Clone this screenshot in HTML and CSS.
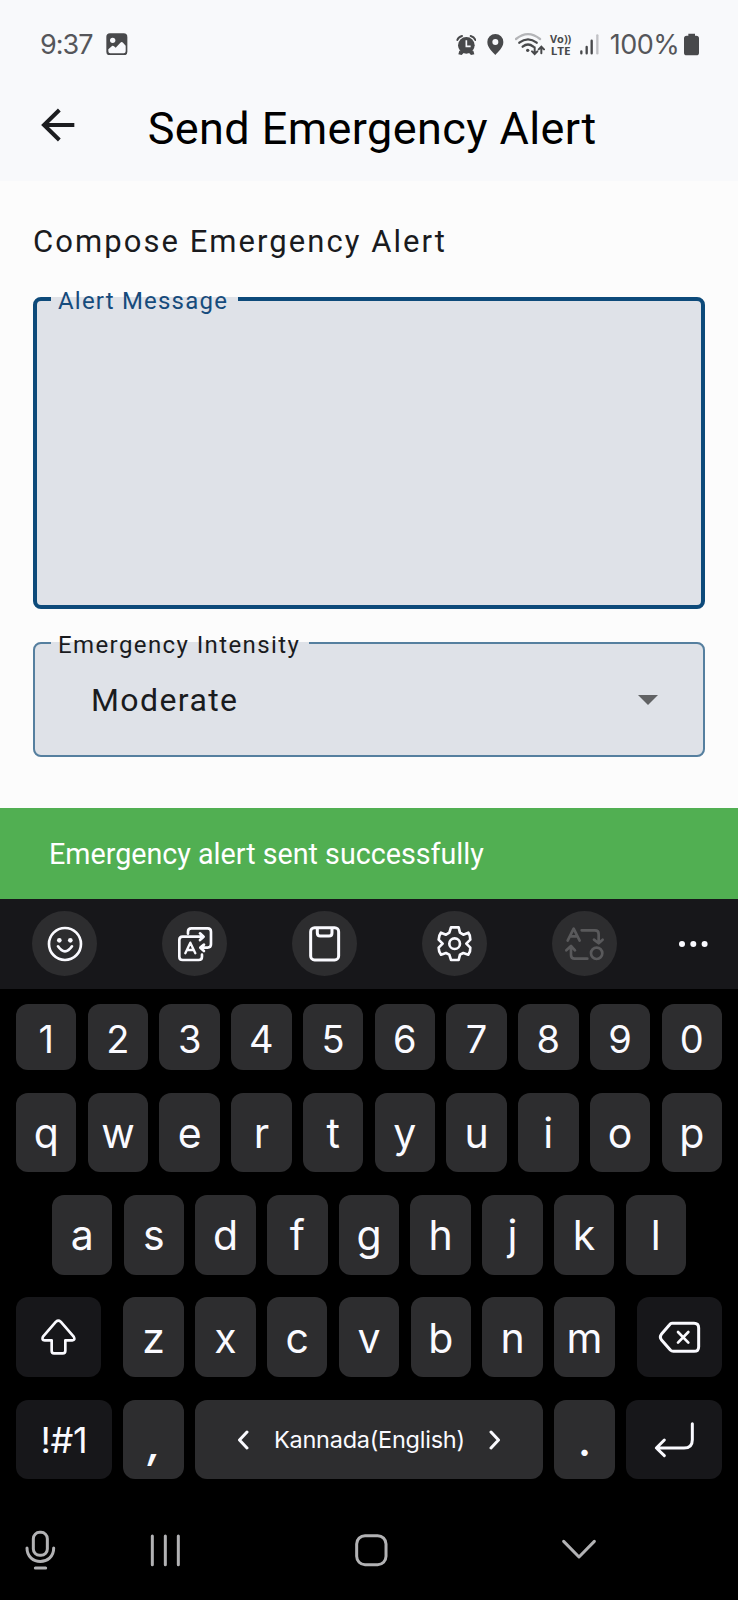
FILE: index.html
```html
<!DOCTYPE html>
<html lang="en">
<head>
<meta charset="utf-8">
<title>Send Emergency Alert</title>
<link rel="stylesheet" href="styles.css">
</head>
<body>
<div class="screen">
  <header class="header">
    <div class="status">
      <span class="time">9:37</span>
      <svg class="photo" viewBox="317 98 65 68"><rect x="318" y="99" width="63" height="66" rx="11" fill="#48494b"/><circle cx="337" cy="120" r="8" fill="#f8f9fc"/><path d="M324 147l11-10q3-2 6 1l5 4 14-15q4-4 8 0l8 9v17q0 6-6 6h-40q-6 0-6-6z" fill="#f8f9fc"/></svg>
      <span class="status-right">
        <svg class="alarm" viewBox="48 50 62 75"><g fill="#48494b"><circle cx="79" cy="90" r="25"/><path d="M58 106l-3 11 10 2 8-8zM100 106l3 11-10 2-8-8z"/></g><path d="M52 74q3-9 14-12M106 74q-3-9-14-12" fill="none" stroke="#48494b" stroke-width="6" stroke-linecap="round"/><path d="M79 75v18h13" fill="none" stroke="#f8f9fc" stroke-width="5"/></svg>
        <svg class="pin" viewBox="143 50 50 75"><path d="M168 119c-8-10-24-21-24-39a24 24 0 0 1 48 0c0 18-16 29-24 39z" fill="#48494b"/><circle cx="168" cy="80" r="9" fill="#f8f9fc"/></svg>
        <svg class="wifi" viewBox="225 50 90 75"><g fill="none" stroke-width="7" stroke-linecap="round"><path d="M228 71q36-29 72 0" stroke="#b4b5b8"/><path d="M238 82q26-20 52 0M248 94q16-13 32 0" stroke="#48494b"/><path d="M284 96v19m-8-7l8 8 8-8M304 114V96m-8 6l8-8 8 8" stroke="#48494b" stroke-width="6"/></g><circle cx="263" cy="105" r="5" fill="#48494b"/></svg>
        <svg class="volte" viewBox="332 50 66 75"><g fill="#48494b" font-family="Open Sans, sans-serif" font-weight="700"><text x="332" y="83" font-size="32" textLength="64" lengthAdjust="spacingAndGlyphs">Vo))</text><text x="334" y="120" font-size="34" textLength="60" lengthAdjust="spacingAndGlyphs">LTE</text></g></svg>
        <svg class="signal" viewBox="422 50 56 75"><g stroke="#48494b" stroke-width="7" stroke-linecap="round"><path d="M426 108v6M442 95v19M457 76v38"/><path d="M474 60v54" stroke="#c1c2c5"/></g></svg>
        <span class="percent">100%</span>
        <svg class="battery" viewBox="731 50 45 75"><path d="M744 55h20v6h4q8 0 8 8v43q0 8-8 8h-29q-8 0-8-8V69q0-8 8-8h5z" fill="#48494b"/></svg>
      </span>
    </div>
    <div class="appbar">
      <svg class="back" viewBox="122 324 102 102"><path d="M222 375H131M177 330l-46 45 46 45" fill="none" stroke="#1c1d20" stroke-width="12"/></svg>
      <h1>Send Emergency Alert</h1>
    </div>
  </header>

  <main class="form">
    <h2>Compose Emergency Alert</h2>
    <fieldset class="field message"><legend>Alert Message</legend></fieldset>
    <fieldset class="field intensity"><legend>Emergency Intensity</legend>
      <div class="select"><span>Moderate</span><svg class="caret" viewBox="0 0 20 10"><path d="M0 0h20L10 10z" fill="#616264"/></svg></div>
    </fieldset>
  </main>

  <div class="snackbar">Emergency alert sent successfully</div>

  <section class="keyboard">
    <div class="tools">
      <span class="tool"><svg viewBox="96 332 196 196" fill="none" stroke="#fafaff" stroke-width="8" stroke-linecap="round"><circle cx="195" cy="431" r="48"/><path d="M174 438q21 30 42 0"/><circle cx="178" cy="420" r="7" fill="#fafaff" stroke="none"/><circle cx="211" cy="420" r="7" fill="#fafaff" stroke="none"/></svg></span>
      <span class="tool"><svg viewBox="486 332 196 196" fill="none" stroke="#fafaff" stroke-width="8" stroke-linecap="round" stroke-linejoin="round"><path d="M564 400v-6q0-10 10-10h49q10 0 10 10v38q0 10-10 10h-20M612 433l-11 9 11 10M610 409h-62q-10 0-10 10v50q0 10 10 10h48q10 0 10-10v-6M600 399l11 10-11 10"/><path d="M556 459l15-32 15 32M561 449h20" stroke-width="7"/></svg></span>
      <span class="tool"><svg viewBox="876 332 196 196" fill="none" stroke="#fafaff" stroke-width="9" stroke-linejoin="round"><rect x="932" y="382" width="84" height="97" rx="12"/><path d="M952 382v16q0 9 9 9h26q9 0 9-9v-16"/></svg></span>
      <span class="tool"><svg viewBox="155 63 196 196" fill="none" stroke="#fafaff" stroke-width="8" stroke-linejoin="round"><circle cx="253" cy="161" r="16"/><path d="M242 112h23l4 16 10 6 15-6q7 9 6 21l-12 12 12 12q1 12-6 21l-15-5-10 5-4 16h-23l-5-16-10-5-15 5q-7-9-7-21l12-12-12-12q0-12 7-21l15 6 10-6z"/></svg></span>
      <span class="tool"><svg viewBox="545 63 196 196" fill="none" stroke="#59595b" stroke-width="8" stroke-linecap="round" stroke-linejoin="round"><path d="M592 152l18-36 18 36M599 139h22M634 121h40q11 0 11 11v27M671 149l14 11 12-11M588 181l14-13 12 13M602 171v24q0 11 11 11h38"/><circle cx="679" cy="190" r="17"/></svg></span>
      <svg class="more" viewBox="0 0 30 8" fill="#fafaff"><circle cx="4" cy="4" r="3"/><circle cx="15.3" cy="4" r="3"/><circle cx="26.6" cy="4" r="3"/></svg>
    </div>
    <div class="keys">
      <div class="row digits"><span>1</span><span>2</span><span>3</span><span>4</span><span>5</span><span>6</span><span>7</span><span>8</span><span>9</span><span>0</span></div>
      <div class="row"><span>q</span><span>w</span><span>e</span><span>r</span><span>t</span><span>y</span><span>u</span><span>i</span><span>o</span><span>p</span></div>
      <div class="row home-row"><span>a</span><span>s</span><span>d</span><span>f</span><span>g</span><span>h</span><span>j</span><span>k</span><span>l</span></div>
      <div class="row shift-row">
        <span class="dark shift"><svg viewBox="48 51 255 240" fill="none" stroke="#fafaff" stroke-width="8" stroke-linejoin="round"><path d="M168 125q7-6 14 0l39 45q6 11-4 11h-21v31q0 8-8 8h-26q-7 0-7-8v-31h-21q-10 0-5-11z"/></svg></span>
        <span>z</span><span>x</span><span>c</span><span>v</span><span>b</span><span>n</span><span>m</span>
        <span class="dark backspace"><svg viewBox="801 51 255 240" fill="none" stroke="#fafaff" stroke-width="9" stroke-linecap="round" stroke-linejoin="round"><path d="M906 130h66q14 0 14 14v56q0 14-14 14h-62q-5 0-9-4l-27-31q-6-8 0-16l24-28q4-5 8-5z"/><path d="M924 156l31 32M955 156l-31 32" stroke-width="8"/></svg></span>
      </div>
      <div class="row space-row">
        <span class="dark symbols">!#1</span>
        <span class="comma">,</span>
        <span class="space"><svg viewBox="0 0 12 20"><path d="M10 2L2.500 10 10 18"/></svg><b>Kannada(English)</b><svg viewBox="0 0 12 20"><path d="M2 2l7.500 8L2 18"/></svg></span>
        <span class="period">.</span>
        <span class="dark"><svg viewBox="768 360 288 237" fill="none" stroke="#fafaff" stroke-width="9" stroke-linecap="round" stroke-linejoin="round"><path d="M967 430v48q0 25-25 25h-82M883 479l-24 24 24 23"/></svg></span>
      </div>
    </div>
    <nav class="nav" aria-label="System">
      <svg class="mic" viewBox="75 750 92 122"><rect x="100" y="757" width="42" height="69" rx="19"/><path d="M81 804c0 54 80 54 80 0M106 864h31"/></svg>
      <svg class="recents" viewBox="450 750 93 122"><path d="M457 768v86M496 768v86M535 768v86"/></svg>
      <svg class="home" viewBox="1066 750 98 122"><rect x="1071" y="767" width="88" height="87" rx="25"/></svg>
      <svg class="down" viewBox="575 750 102 122"><path d="M580 784l46 47 46-47"/></svg>
    </nav>
  </section>
</div>
</body>
</html>
```
FILE: styles.css
```css
* { box-sizing: border-box; }
body { margin: 0; background: #000; }
svg { display: block; flex: none; }
.screen { width: 738px; height: 1600px; display: flex; flex-direction: column; background: #fcfcfc; font-family: Roboto, sans-serif; overflow: hidden; }

.header { height: 181px; background: #f8f9fb; }
.status { height: 88px; display: flex; align-items: center; padding: 0 39px 0 40px; font-family: Inter, sans-serif; font-weight: 400; font-size: 27px; color: #55565a; }
.time { width: 66px; letter-spacing: -1px; }
.photo { width: 21.7px; height: 22.7px; }
.status-right { margin-left: auto; display: flex; align-items: center; }
.status-right svg { height: 25px; }
.alarm { width: 20.7px; margin-right: 11px; }
.pin { width: 16.7px; margin-right: 10.7px; }
.wifi { width: 30px; margin-right: 5.7px; }
.volte { width: 22px; margin-right: 8px; overflow: visible; }
.signal { width: 18.7px; margin-right: 10.8px; }
.percent { width: 74.2px; white-space: nowrap; letter-spacing: -0.5px; }
.battery { width: 15px; }

.appbar { height: 74px; display: flex; align-items: center; padding-left: 40.7px; }
.back { width: 34px; height: 34px; margin-right: 73px; }
h1 { margin: 7px 0 0; font-size: 45px; font-weight: 400; line-height: 50px; color: #000; white-space: nowrap; letter-spacing: 0.4px; }

.form { height: 627px; padding: 42px 33px 0; color: #1a1b1e; }
h2 { margin: 0; height: 64px; line-height: 38px; font-size: 31px; font-weight: 400; letter-spacing: 2.05px; white-space: nowrap; }
.field { margin: 0; padding: 0; min-width: 0; background: #dfe2e8; border-radius: 8px; }
.field legend { margin-left: 14px; padding: 4px 7px 0; height: 24px; line-height: 21px; font-size: 24px; letter-spacing: 1.2px; white-space: nowrap; }
.message { height: 322px; border: 4px solid #0d4a7a; }
.message legend { width: 187px; color: #164b7c; }
.intensity { height: 126px; margin-top: 22px; border: 2px solid #557f9f; }
.intensity legend { margin-left: 16px; width: 258px; letter-spacing: 1.4px; }
.select { display: flex; align-items: center; justify-content: space-between; height: 100px; padding: 0 45px 10px 56px; font-size: 32px; letter-spacing: 1.4px; }
.caret { width: 20px; height: 10px; }

.snackbar { height: 90.5px; padding: 2px 0 0 49px; display: flex; align-items: center; background: #51af52; color: #fff; font-size: 28.7px; white-space: nowrap; }

.keyboard { flex: 1; background: #000; color: #fafaff; font-family: Inter, sans-serif; }
.tools { height: 90.7px; display: flex; align-items: center; gap: 64.6px; padding-left: 32px; background: #17171a; }
.tool { width: 65.3px; height: 65.3px; border-radius: 50%; background: #2d2d2f; flex: none; }
.tool svg { width: 100%; height: 100%; }
.more { width: 30px; height: 8px; margin-left: -3px; }

.keys { padding: 15.3px 16px 0; display: grid; gap: 22.7px; }
.row { display: grid; grid-template-columns: repeat(10, 1fr); gap: 11.3px; height: 79.7px; font-size: 41px; }
.row > span { display: flex; align-items: center; justify-content: center; padding-top: 1px; background: #2d2d2f; border-radius: 12px; min-width: 0; }
.row > .dark { background: #17171a; padding-top: 0; }
.dark svg { width: 100%; height: 100%; }
.digits { height: 65.5px; font-size: 38px; }
.row.digits > span { padding-top: 3px; }
.home-row { grid-template-columns: repeat(9, 1fr); padding: 0 36px; }
.shift-row { grid-template-columns: 96px repeat(7, 1fr) 96px; }
.shift { margin-right: 11px; }
.backspace { margin-left: 11px; }
.space-row { grid-template-columns: 96px 60.3px 1fr 60.3px 96px; }
.row > .symbols { padding-top: 0; font-size: 36px; letter-spacing: -0.3px; }
.row > .comma { padding: 7px 0 0 2px; font-weight: 600; font-style: italic; }
.row > .period { padding-top: 3px; font-weight: 600; }
.row > .space { gap: 24px; padding-top: 0; }
.space b { width: 192px; padding: 0 0 1px 1px; font-weight: 400; font-size: 23.5px; letter-spacing: -0.25px; white-space: nowrap; }
.space svg { width: 12px; height: 20px; fill: none; stroke: #fafaff; stroke-width: 3; stroke-linecap: round; stroke-linejoin: round; }

.nav { display: flex; padding: 50.5px 0 0 25px; }
.nav svg { height: 40.7px; fill: none; stroke: #b2b2b4; stroke-width: 9; stroke-linecap: round; stroke-linejoin: round; }
.mic { width: 30.7px; margin-right: 94.3px; }
.recents { width: 31px; margin-right: 174.3px; }
.home { width: 32.7px; margin-right: 173.7px; }
.down { width: 34px; }
```
